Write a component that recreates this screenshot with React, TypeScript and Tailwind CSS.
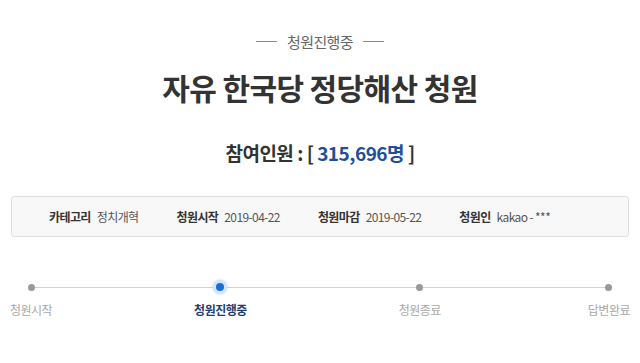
const FONT = { fontFamily: '"Noto Sans CJK KR", "Noto Sans", sans-serif' };

interface Step {
  label: string;
  active?: boolean;
}

const STEPS: Step[] = [
  { label: '청원시작' },
  { label: '청원진행중', active: true },
  { label: '청원종료' },
  { label: '답변완료' },
];

const INFO = [
  { label: '카테고리', value: '정치개혁' },
  { label: '청원시작', value: '2019-04-22' },
  { label: '청원마감', value: '2019-05-22' },
  { label: '청원인', value: 'kakao - ***' },
];

function StepDot({ active }: { active?: boolean }) {
  if (active) {
    return (
      <span className="flex h-[14px] w-[14px] items-center justify-center rounded-full bg-[#d4e5fb] shadow-[0_0_3px_#b7d4fa]">
        <span className="h-[8px] w-[8px] rounded-full bg-[#1a6fd6]" />
      </span>
    );
  }
  return <span className="h-[7px] w-[7px] rounded-full bg-[#999]" />;
}

export default function App() {
  return (
    <div style={FONT} className="flex h-[363px] w-[640px] flex-col items-center bg-white pt-[31px]">
      <div className="flex items-center gap-[10px] text-[15px] leading-[21px] text-[#666]">
        <span className="h-px w-[21px] bg-[#888]" />
        <span className="tracking-[-0.6px]">청원진행중</span>
        <span className="h-px w-[21px] bg-[#888]" />
      </div>

      <h1 className="mt-[16px] text-[30px] font-bold leading-[38px] tracking-[-0.6px] text-[#333]">
        자유 한국당 정당해산 청원
      </h1>

      <p className="mt-[34px] text-[19px] font-bold leading-[26px] tracking-[-0.5px] text-[#333]">
        참여인원 : [ <span className="text-[#1d4f9a]">315,696명</span> ]
      </p>

      <div className="mt-[30px] flex h-[41px] w-[618px] items-center gap-[38px] rounded-[3px] border border-[#dedede] bg-[#f8f8f8] pl-[37px] text-[12px] tracking-[-0.6px]">
        {INFO.map((item) => (
          <div key={item.label} className="flex items-center gap-[6px]">
            <span className="font-bold text-[#333]">{item.label}</span>
            <span className="text-[#555]">{item.value}</span>
          </div>
        ))}
      </div>

      <div className="relative mt-[43px] flex w-[620px] justify-between">
        <span className="absolute left-[20px] right-[20px] top-[7px] h-px bg-[#d2d2d2]" />
        {STEPS.map((step) => (
          <div
            key={step.label}
            className={`relative flex flex-col items-center ${step.active ? '-ml-[5px] mr-[5px]' : ''}`}
          >
            <span className="flex h-[14px] items-center">
              <StepDot active={step.active} />
            </span>
            <span
              className={`mt-[7px] text-[12px] leading-[18px] tracking-[-0.5px] ${
                step.active ? 'font-bold text-[#1f3f73]' : 'text-[#a8a8a8]'
              }`}
            >
              {step.label}
            </span>
          </div>
        ))}
      </div>
    </div>
  );
}
